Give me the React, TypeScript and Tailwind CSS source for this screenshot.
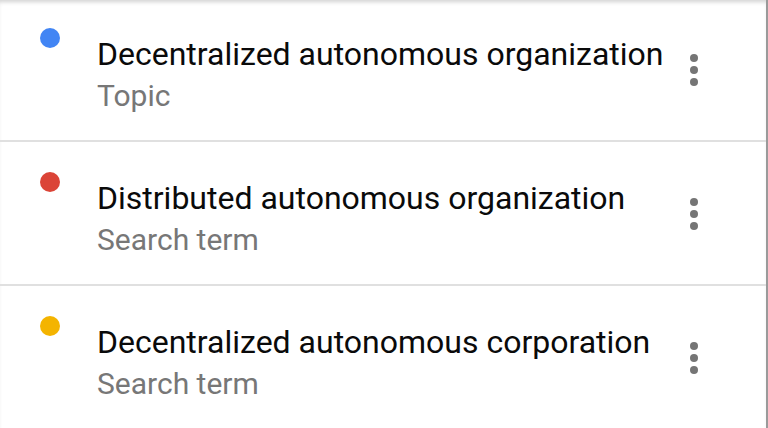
import React from 'react';

type Item = { title: string; kind: string; dot: string };

const ITEMS: Item[] = [
    { title: 'Decentralized autonomous organization', kind: 'Topic', dot: 'bg-[#4285f4]' },
    { title: 'Distributed autonomous organization', kind: 'Search term', dot: 'bg-[#db4437]' },
    { title: 'Decentralized autonomous corporation', kind: 'Search term', dot: 'bg-[#f4b400]' },
];

const Kebab: React.FC = () => (
    <div className="mt-[56px] flex flex-col gap-1 shrink-0">
        <div className="w-2 h-2 rounded-full bg-[#757575]" />
        <div className="w-2 h-2 rounded-full bg-[#757575]" />
        <div className="w-2 h-2 rounded-full bg-[#757575]" />
    </div>
);

export default function App() {
    return (
        <div
            className="w-[768px] h-[428px] overflow-hidden bg-white border-r-2 border-[#9a9a9a] shadow-[inset_0_4px_4px_-2px_rgba(0,0,0,0.18)]"
            style={{ fontFamily: 'Roboto, "Noto Sans", sans-serif' }}
        >
            <div className="-mt-[2px]">
                {ITEMS.map((item) => (
                    <div key={item.title} className="h-[144px] flex items-start pl-[40px] pr-[68px] border-b-2 border-[#e0e0e0]">
                        <div className={`mt-[30px] w-5 h-5 rounded-full shrink-0 ${item.dot}`} />
                        <div className="flex-1 ml-[37px] pt-[36px] whitespace-nowrap">
                            <div className="text-[32px] leading-[40px] text-[#0a0a0a]">{item.title}</div>
                            <div className="mt-[2px] text-[30px] leading-[40px] text-[#777]">{item.kind}</div>
                        </div>
                        <Kebab />
                    </div>
                ))}
            </div>
        </div>
    );
}
